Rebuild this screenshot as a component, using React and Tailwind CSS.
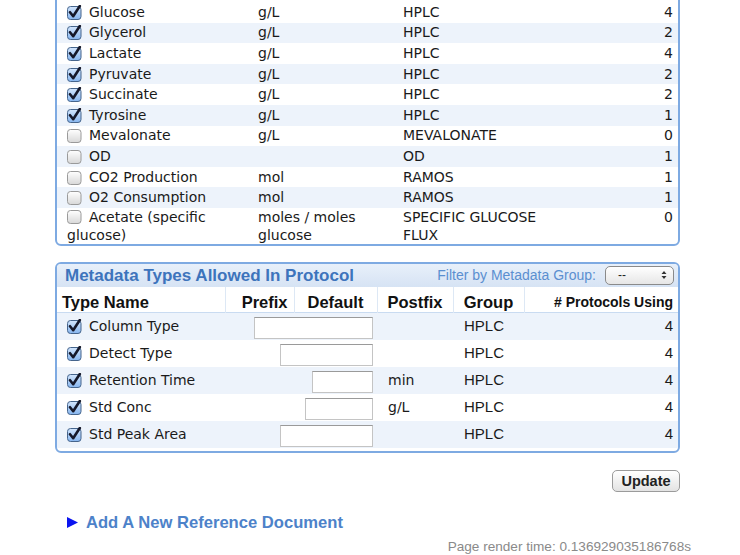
import React from "react";

const verdana = { fontFamily: '"DejaVu Sans", Verdana, sans-serif' };
const arial = { fontFamily: '"Liberation Sans", Arial, sans-serif' };

function Check({ on }) {
  return (
    <svg width="15" height="15" viewBox="0 0 15 15" className="shrink-0">
      <defs>
        <linearGradient id="cbon" x1="0" y1="0" x2="0" y2="1">
          <stop offset="0" stopColor="#d3e6fd" />
          <stop offset="1" stopColor="#86b5ee" />
        </linearGradient>
        <linearGradient id="cboff" x1="0" y1="0" x2="0" y2="1">
          <stop offset="0" stopColor="#ffffff" />
          <stop offset="1" stopColor="#d8d8d8" />
        </linearGradient>
      </defs>
      <rect
        x="0.5"
        y="1.5"
        width="13.5"
        height="13"
        rx="3"
        fill={on ? "url(#cbon)" : "url(#cboff)"}
        stroke={on ? "#46658c" : "#9a9a9a"}
      />
      {on && (
        <path
          d="M3 7.2 L6.2 11.2 L12.8 1"
          fill="none"
          stroke="#15182a"
          strokeWidth="2.6"
          strokeLinecap="round"
          strokeLinejoin="round"
        />
      )}
    </svg>
  );
}

const measurements = [
  { name: "Glucose", unit: "g/L", method: "HPLC", count: 4, on: true },
  { name: "Glycerol", unit: "g/L", method: "HPLC", count: 2, on: true },
  { name: "Lactate", unit: "g/L", method: "HPLC", count: 4, on: true },
  { name: "Pyruvate", unit: "g/L", method: "HPLC", count: 2, on: true },
  { name: "Succinate", unit: "g/L", method: "HPLC", count: 2, on: true },
  { name: "Tyrosine", unit: "g/L", method: "HPLC", count: 1, on: true },
  { name: "Mevalonate", unit: "g/L", method: "MEVALONATE", count: 0, on: false },
  { name: "OD", unit: "", method: "OD", count: 1, on: false },
  { name: "CO2 Production", unit: "mol", method: "RAMOS", count: 1, on: false },
  { name: "O2 Consumption", unit: "mol", method: "RAMOS", count: 1, on: false },
];

const metadata = [
  { name: "Column Type", input: "w-[119px]", postfix: "" },
  { name: "Detect Type", input: "w-[93px]", postfix: "" },
  { name: "Retention Time", input: "w-[61px]", postfix: "min" },
  { name: "Std Conc", input: "w-[68px]", postfix: "g/L" },
  { name: "Std Peak Area", input: "w-[93px]", postfix: "" },
];

export default function App() {
  return (
    <div className="min-h-screen bg-white overflow-hidden">
      <div className="w-[625px] ml-[55px] -mt-[12px]">
        {/* measurement types panel, scrolled off the top */}
        <div
          className="border-2 border-[#7eaae2] rounded-b-[6px] pt-[12px] text-[14px] text-[#1a1a1a]"
          style={verdana}
        >
          {measurements.map((m, i) => (
            <div
              key={m.name}
              className={`flex items-center h-[20.6px] leading-[17px] ${
                i % 2 === 1 ? "bg-[#edf3fb]" : "bg-white"
              }`}
            >
              <div className="w-[201px] flex items-center pl-[10px] gap-[7px]">
                <Check on={m.on} />
                <span>{m.name}</span>
              </div>
              <div className="w-[145px]">{m.unit}</div>
              <div className="flex-1">{m.method}</div>
              <div className="pr-[5px]">{m.count}</div>
            </div>
          ))}
          <div className="flex leading-[18px]">
            <div className="w-[201px] pl-[10px] pr-[4px]">
              <span className="inline-flex align-[-2px] mr-[7px]">
                <Check on={false} />
              </span>
              Acetate (specific glucose)
            </div>
            <div className="w-[145px]">
              moles / moles
              <br />
              glucose
            </div>
            <div className="flex-1">
              SPECIFIC GLUCOSE
              <br />
              FLUX
            </div>
            <div className="pr-[5px]">0</div>
          </div>
        </div>

        {/* metadata types panel */}
        <div className="mt-[16px] border-2 border-[#7eaae2] rounded-[6px] overflow-hidden pb-[3px]">
          <div
            className="h-[23px] flex items-center justify-between pl-[8px] pr-[4px] bg-gradient-to-b from-[#e8f0fa] to-[#d6e3f4]"
            style={arial}
          >
            <span className="text-[17px] font-bold text-[#3d74bc]">
              Metadata Types Allowed In Protocol
            </span>
            <div className="flex items-center gap-[9px]">
              <span className="text-[14px] text-[#5b8fd0]">Filter by Metadata Group:</span>
              <div className="w-[69px] h-[19px] rounded-[5px] border border-[#8a8a8a] bg-gradient-to-b from-white to-[#e6e6e6] flex items-center justify-between pl-[12px] pr-[6px] text-[12px] text-[#222]">
                <span>--</span>
                <svg width="6" height="10" viewBox="0 0 6 10">
                  <path d="M0.5 4 L3 1 L5.5 4 Z M0.5 6 L3 9 L5.5 6 Z" fill="#333" />
                </svg>
              </div>
            </div>
          </div>

          <table className="w-full border-collapse">
            <thead>
              <tr
                className="h-[26px] leading-[20px] border-b border-[#c9dbf1] text-[#111] font-bold"
                style={arial}
              >
                <th className="w-[168px] text-left pl-[5px] pt-[4px] text-[16.5px] border-r border-[#dde8f5]">
                  Type Name
                </th>
                <th className="w-[69px] text-right pr-[6px] pt-[4px] text-[16.5px] border-r border-[#dde8f5]">
                  Prefix
                </th>
                <th className="w-[83px] text-center pt-[4px] text-[16.5px] border-r border-[#dde8f5]">
                  Default
                </th>
                <th className="w-[76px] text-center pt-[4px] text-[16.5px] border-r border-[#dde8f5]">
                  Postfix
                </th>
                <th className="w-[71px] text-center pt-[4px] text-[16.5px] border-r border-[#dde8f5]">
                  Group
                </th>
                <th className="text-right pr-[5px] pt-[4px] text-[14px]">
                  # Protocols Using
                </th>
              </tr>
            </thead>
            <tbody>
              {metadata.map((r, i) => (
                <tr
                  key={r.name}
                  className={`h-[27px] ${i % 2 === 0 ? "bg-[#edf3fb]" : "bg-white"}`}
                >
                  <td className="pl-[10px] text-[14px] text-[#1a1a1a]" style={verdana}>
                    <div className="flex items-center gap-[7px]">
                      <Check on />
                      <span>{r.name}</span>
                    </div>
                  </td>
                  <td colSpan={2} className="text-right pr-[4px]">
                    <input
                      type="text"
                      className={`${r.input} h-[22px] bg-white border border-[#c4c4c4] border-t-[#9a9a9a] align-middle outline-none`}
                    />
                  </td>
                  <td className="pl-[11px] text-[14px] text-[#1a1a1a]" style={verdana}>
                    {r.postfix}
                  </td>
                  <td className="pl-[11px] text-[15px] text-[#1a1a1a]" style={arial}>
                    HPLC
                  </td>
                  <td className="text-right pr-[5px] text-[15px] text-[#1a1a1a]" style={arial}>
                    4
                  </td>
                </tr>
              ))}
            </tbody>
          </table>
        </div>

        <div className="flex justify-end mt-[17px]">
          <button
            className="h-[22px] w-[68px] rounded-[5px] border border-[#9b9b9b] bg-gradient-to-b from-white to-[#e3e3e3] text-[14.5px] font-bold text-[#222] leading-none"
            style={arial}
          >
            Update
          </button>
        </div>

        <div className="mt-[22px] ml-[12px] h-[18px] flex items-center gap-[8px]" style={arial}>
          <svg width="11" height="11" viewBox="0 0 11 11">
            <path d="M0 0 L11 5.5 L0 11 Z" fill="#0a14f0" />
          </svg>
          <span className="text-[16.6px] font-bold text-[#4d82c9] leading-[18px]">
            Add A New Reference Document
          </span>
        </div>
      </div>

      <div
        className="w-[636px] ml-[55px] text-right mt-[7px] text-[13.6px] leading-[15px] text-[#8a8a8a]"
        style={arial}
      >
        Page render time: 0.136929035186768s
      </div>
    </div>
  );
}
